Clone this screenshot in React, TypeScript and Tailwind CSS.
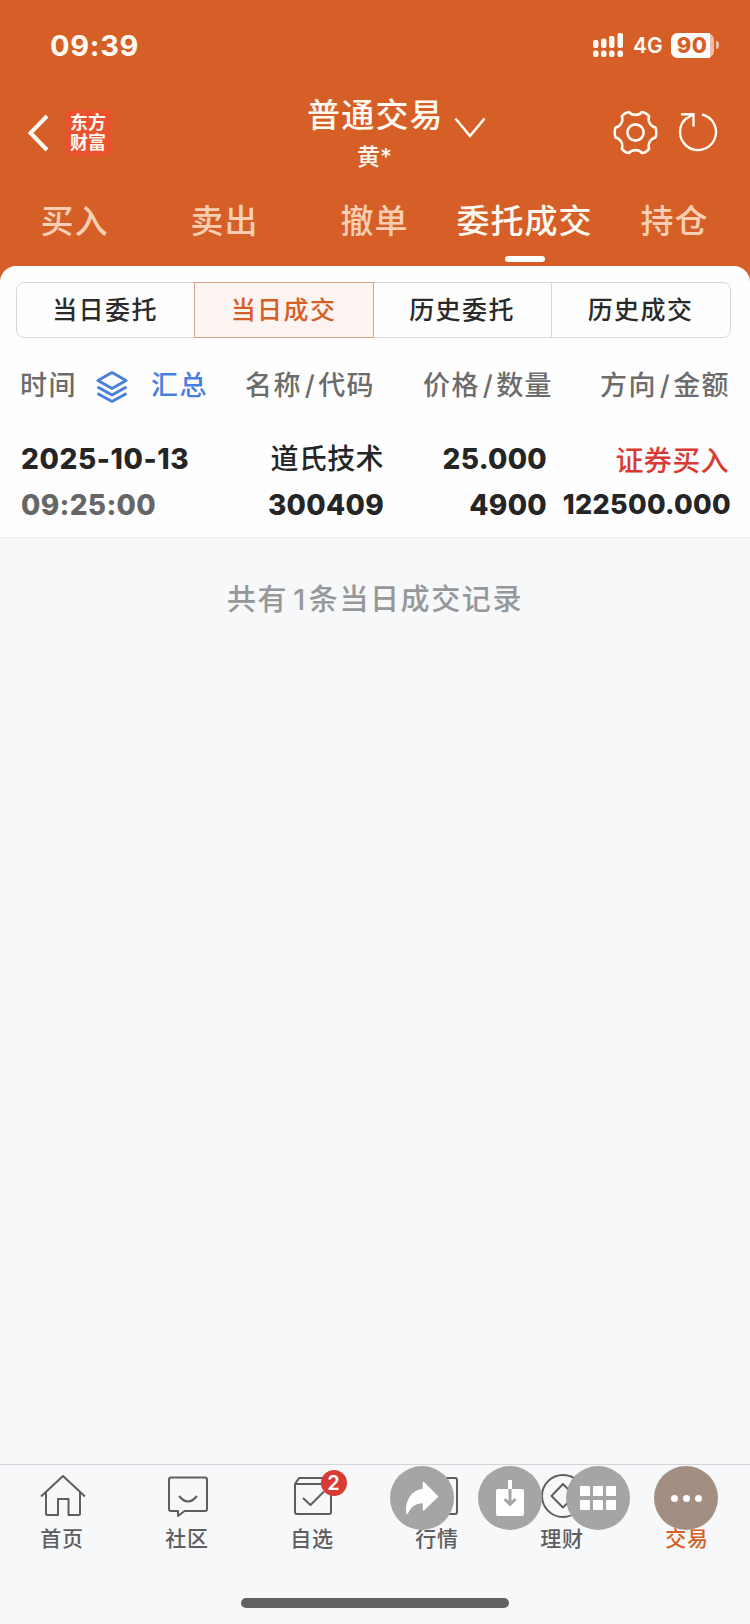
import type { ReactNode } from "react";

const tabs = ["买入", "卖出", "撤单", "委托成交", "持仓"];
const segments = ["当日委托", "当日成交", "历史委托", "历史成交"];

type NavItemProps = {
  label: string;
  active?: boolean;
  badge?: number;
  children?: ReactNode;
};

function StatusBar() {
  return (
    <div className="flex h-[90px] items-center justify-between pr-[31px] pl-[50px]">
      <span className="text-[29px] leading-none font-bold tracking-[0.7px]">09:39</span>
      <div className="flex items-center">
        <svg width="31" height="26" viewBox="0 0 31 26" fill="currentColor">
          <rect x="0" y="8" width="5.500" height="8" rx="2" />
          <rect x="8" y="6.500" width="5.500" height="9.500" rx="2" />
          <rect x="16" y="4" width="5.500" height="12" rx="2" />
          <rect x="24.500" y="1" width="5.500" height="15" rx="2" />
          <rect x="0" y="18.500" width="5.500" height="6.500" rx="2" />
          <rect x="8" y="18.500" width="5.500" height="6.500" rx="2" />
          <rect x="16" y="18.500" width="5.500" height="6.500" rx="2" />
          <rect x="24.500" y="18.500" width="5.500" height="6.500" rx="2" />
        </svg>
        <span className="mt-[1px] ml-[9px] w-[30px] text-[21px] leading-none font-semibold">4G</span>
        <div className="ml-[8px] flex h-[25px] w-[43px] rounded-[7px] bg-[#efbfa5]">
          <div className="flex h-full w-[39px] items-center justify-center rounded-l-[7px] bg-white pl-[3px] text-[22px] leading-[24px] font-extrabold tracking-[0.4px] text-[#d65e27]">
            90
          </div>
        </div>
        <div className="ml-[2px] h-[8px] w-[3px] rounded-r-full bg-[#efbfa5]" />
      </div>
    </div>
  );
}

function TitleBar() {
  return (
    <div className="flex h-[96px]">
      <div className="flex w-[306px] items-center pb-[11px] pl-[27px]">
        <svg width="24" height="40" viewBox="0 0 24 40" fill="none" stroke="currentColor" strokeWidth="4">
          <path d="M20 3 3.500 20 20 37" />
        </svg>
        <div className="ml-[14px] flex h-[46px] w-[46px] flex-col items-center justify-center rounded-[6px] bg-[#e9522d] text-[18px] leading-[20px] font-bold">
          <span>东方</span>
          <span>财富</span>
        </div>
      </div>
      <div className="flex w-[182px] flex-col pl-[1px]">
        <div className="flex items-center">
          <h1 className="w-[135px] text-[33px] leading-[50px] font-medium tracking-[1.2px] whitespace-nowrap">
            普通交易
          </h1>
          <svg className="mt-[25px] ml-[12px]" width="32" height="22" viewBox="0 0 32 22" fill="none" stroke="currentColor" strokeWidth="2.600">
            <path d="M1.500 1.500 16 19 30.500 1.500" />
          </svg>
        </div>
        <span className="mt-[2px] ml-[50px] text-[23px] leading-[30px] font-medium">黄*</span>
      </div>
      <div className="flex flex-1 items-center justify-end gap-[20px] pr-[32px] pb-[12px]">
        <svg width="45" height="45" viewBox="0 0 46 46" fill="none" stroke="currentColor" strokeWidth="2.600" strokeLinejoin="round">
          <path d="M16.500 2C19 6 27 6 29.500 2Q34 2.500 37 6.500C35 11.500 38.500 17 43.500 18Q45 23 43.500 28C38.500 29 35 34.500 37 39.500Q34 43.500 29.500 44C27 40 19 40 16.500 44Q12 43.500 9 39.500C11 34.500 7.500 29 2.500 28Q1 23 2.500 18C7.500 17 11 11.500 9 6.500Q12 2.500 16.500 2Z" />
          <circle cx="23" cy="23" r="8.300" />
        </svg>
        <svg width="40" height="42" viewBox="0 0 40 42" fill="none" stroke="currentColor" strokeWidth="2.400">
          <path d="M24 3.500A18 18 0 1 1 9 6.800M3 3.300H15.500V15.500M15.500 3.300 8.500 7.500" />
        </svg>
      </div>
    </div>
  );
}

function ColumnTitle({ left, right }: { left: string; right: string }) {
  return (
    <>
      {left}
      <span className="pr-[2px] pl-[3px]">/</span>
      {right}
    </>
  );
}

function NavItem({ label, active, badge, children }: NavItemProps) {
  return (
    <div className={active ? "flex flex-1 flex-col items-center text-[#d65e27]" : "flex flex-1 flex-col items-center text-[#5e5e60]"}>
      <div className="relative mt-[8px] h-[48px] w-[48px]">
        <svg width="48" height="48" viewBox="0 0 48 48" fill="none" stroke="currentColor" strokeWidth="2" strokeLinejoin="round">
          {children}
        </svg>
        {badge && (
          <span className="absolute top-[-3px] left-[32px] flex h-[26px] w-[26px] items-center justify-center rounded-full bg-[#d93a34] text-[20px] leading-none font-semibold text-white">
            {badge}
          </span>
        )}
      </div>
      <span className="pr-[1px] text-[21px] leading-[36px] font-medium tracking-[0.8px]">{label}</span>
    </div>
  );
}

function FloatingActions() {
  const round = "flex h-[64px] w-[64px] items-center justify-center rounded-full";
  return (
    <div className="absolute top-[1px] left-[390px] flex gap-[24px]">
      <div className={`${round} bg-[#a5a5a6]`}>
        <svg width="34" height="34" viewBox="0 0 34 34" fill="#fff" stroke="#fff" strokeWidth="1.500" strokeLinejoin="round">
          <path d="M18.500 1.500 32.500 15.500 18.500 29V21.500C10 21 5 25 2 32.500C0.500 21 6 9.500 18.500 8.500Z" />
        </svg>
      </div>
      <div className={`${round} bg-[#a5a5a6]`}>
        <svg width="30" height="36" viewBox="0 0 30 36">
          <rect x="1" y="9" width="28" height="27" rx="2" fill="#fff" />
          <path d="M13 0h4v9h-4z" fill="#fff" />
          <path d="M15 9V24M9.500 19 15 24.500 20.500 19" fill="none" stroke="#a5a5a6" strokeWidth="3" />
        </svg>
      </div>
      <div className={`${round} bg-[#a5a5a6]`}>
        <div className="grid grid-cols-3 gap-x-[3px] gap-y-[4px]">
          {[0, 1, 2, 3, 4, 5].map((n) => (
            <div key={n} className="h-[10px] w-[10px] rounded-[1px] bg-white" />
          ))}
        </div>
      </div>
      <div className={`${round} gap-[5px] bg-[#a38e82]`}>
        <div className="h-[7px] w-[7px] rounded-full bg-white" />
        <div className="h-[7px] w-[7px] rounded-full bg-white" />
        <div className="h-[7px] w-[7px] rounded-full bg-white" />
      </div>
    </div>
  );
}

export default function App() {
  return (
    <div className="flex h-[1624px] w-[750px] flex-col overflow-hidden bg-[#f7f8fa] font-['Inter','Noto_Sans_CJK_SC',sans-serif]">
      <header className="h-[282px] bg-[#d65e27] text-[#fffaf2]">
        <StatusBar />
        <TitleBar />
        <nav className="grid h-[80px] grid-cols-5">
          {tabs.map((tab) => (
            <div key={tab} className="flex flex-col items-center">
              <span
                className={
                  tab === "委托成交"
                    ? "h-[70px] pr-[1px] text-[33px] leading-[71px] font-medium tracking-[1px] whitespace-nowrap"
                    : "h-[70px] pr-[1px] text-[33px] leading-[71px] font-medium tracking-[1px] whitespace-nowrap text-[#f9cfb4]"
                }
              >
                {tab}
              </span>
              {tab === "委托成交" && <div className="h-[6px] w-[40px] rounded-full bg-white" />}
            </div>
          ))}
        </nav>
      </header>

      <main className="-mt-[16px] flex-1">
        <section className="h-[272px] rounded-t-[16px] border-b border-[#ebecee] bg-[#fefefe] pt-[16px]">
          <div className="mx-[16px] flex h-[56px] w-[715px] rounded-[8px] border border-[#d8d8d8] text-[25px] leading-none font-medium tracking-[1.4px] text-[#2a2a2a]">
            {segments.map((segment, i) => (
              <div
                key={segment}
                className={
                  i === 1
                    ? "-my-px flex w-[180px] items-center justify-center border border-[#e0a48c] bg-[#fcf4f1] pt-[1px] pr-[1px] text-[#d65e27]"
                    : i === 3
                      ? "flex flex-1 items-center justify-center border-l border-[#d8d8d8] pt-[1px] pr-[1px]"
                      : "flex w-[177px] items-center justify-center pt-[1px] pr-[1px]"
                }
              >
                {segment}
              </div>
            ))}
          </div>

          <div className="flex h-[94px] items-center px-[20px] text-[27px] leading-none font-medium tracking-[1.4px] whitespace-nowrap text-[#6c6c6c]">
            <span className="w-[76px]">时间</span>
            <svg className="mt-[3px]" width="32" height="34" viewBox="0 0 32 34" fill="none" stroke="#4a80dd" strokeWidth="3" strokeLinejoin="round">
              <path d="M16 2.500 30 10.500 16 18.500 2 10.500Z" />
              <path d="M1.500 17 16 25 30.500 17M1.500 23.500 16 31.500 30.500 23.500" />
            </svg>
            <span className="ml-[23px] w-[94px] text-[#4a80dd]">汇总</span>
            <span className="w-[178px]">
              <ColumnTitle left="名称" right="代码" />
            </span>
            <span className="w-[177px]">
              <ColumnTitle left="价格" right="数量" />
            </span>
            <span>
              <ColumnTitle left="方向" right="金额" />
            </span>
          </div>

          <div className="grid grid-cols-[181px_183px_163px_184px] pt-[4px] pl-[20px] text-right text-[28px] leading-[46px] font-extrabold tracking-[0.3px] whitespace-nowrap text-[#252525]">
            <span className="pl-[1px] text-left tracking-[0.6px]">2025-10-13</span>
            <span className="font-medium tracking-[0.4px]">道氏技术</span>
            <span>25.000</span>
            <span className="pt-[4px] pr-[2px] leading-[42px] font-medium tracking-[0.4px] text-[#d93a34]">证券买入</span>
            <span className="pl-[1px] text-left text-[#666]">09:25:00</span>
            <span>300409</span>
            <span>4900</span>
            <span className="text-[27px]">122500.000</span>
          </div>
        </section>

        <p className="pt-[39px] text-center text-[29px] leading-[46px] font-medium tracking-[1.6px] text-[#969799]">
          共有<span className="pr-[2px] pl-[5px]">1</span>条当日成交记录
        </p>
      </main>

      <footer className="relative flex h-[160px] flex-col items-center border-t border-[#d3d4d8] bg-[#f7f8fa]">
        <div className="flex h-[133px] w-[750px]">
          <NavItem label="首页">
            <path d="M2 23.500 24 3 46 23.500M7 19.500V40.500Q7 42 8.500 42H19V26H29.500V42H39.500Q41 42 41 40.500V19.500" />
          </NavItem>
          <NavItem label="社区">
            <path d="M7 4.500H41Q43 4.500 43 6.500V36Q43 38 41 38H20.500L14 43V38H7Q5 38 5 36V6.500Q5 4.500 7 4.500Z" />
            <path d="M15 23Q24 34 33 23" />
          </NavItem>
          <NavItem label="自选" badge={2}>
            <path d="M6 11 10 5H37L42 11V39Q42 41 40 41H8Q6 41 6 39ZM6 11H42M14 25 21.500 32 35 18.500" />
          </NavItem>
          <NavItem label="行情">
            <rect x="5" y="5" width="38" height="36" rx="2" />
          </NavItem>
          <NavItem label="理财">
            <circle cx="24" cy="23" r="21" />
            <path d="M24 11 35.500 23 24 34.500 12.500 23Z" />
          </NavItem>
          <NavItem label="交易" active />
        </div>
        <FloatingActions />
        <div className="h-[10px] w-[268px] rounded-full bg-[#626264]" />
      </footer>
    </div>
  );
}
